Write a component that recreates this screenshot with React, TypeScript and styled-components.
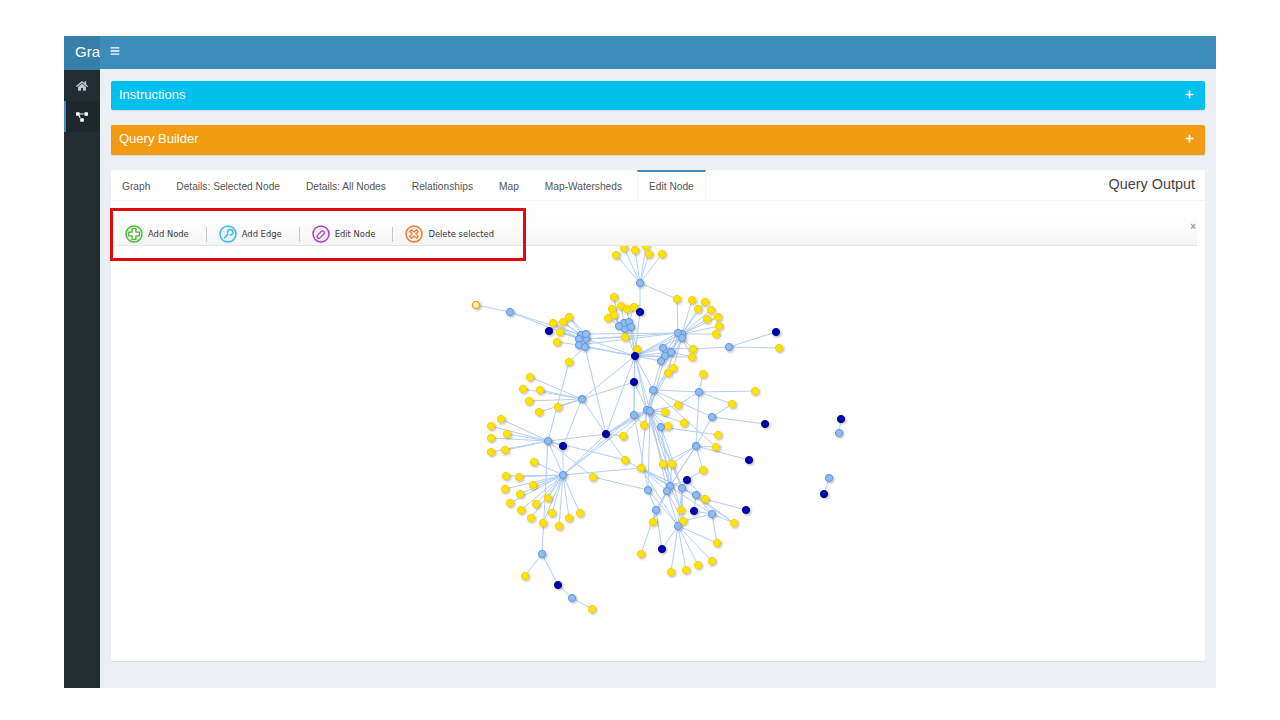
import React from 'react';
import styled, { createGlobalStyle } from 'styled-components';
import { FaBars, FaHome, FaPlus, FaProjectDiagram } from 'react-icons/fa';

const GlobalStyle = createGlobalStyle`
    html, body {
        margin: 0;
        padding: 0;
        background: #fff;
        font-family: "Liberation Sans", Arial, sans-serif;
    }
`;

const Frame = styled.div`
    width: 1152px;
    height: 652px;
    margin: 36px 64px 0;
    display: flex;
    overflow: hidden;
`;

const Sidebar = styled.aside`
    width: 36px;
    flex: none;
    background: #222d32;
`;

const Brand = styled.div`
    height: 34px;
    width: 36px;
    padding-left: 11px;
    box-sizing: border-box;
    background: #367fa9;
    color: #fff;
    font-size: 15px;
    line-height: 31px;
    white-space: nowrap;
    overflow: hidden;
`;

const SideItem = styled.div<{ $active?: boolean }>`
    height: 31px;
    display: flex;
    align-items: center;
    justify-content: center;
    box-sizing: border-box;
    color: ${p => (p.$active ? '#fff' : '#b8c7ce')};
    background: ${p => (p.$active ? '#1e282c' : 'transparent')};
    border-left: 2px solid ${p => (p.$active ? '#3c8dbc' : 'transparent')};
    padding-right: 2px;
    font-size: 12px;
`;

const Main = styled.main`
    flex: 1;
    display: flex;
    flex-direction: column;
    background: #ecf0f5;
`;

const Header = styled.header`
    height: 33px;
    flex: none;
    box-sizing: border-box;
    background: #3c8dbc;
    color: #fff;
    display: flex;
    align-items: center;
    padding: 0 0 3px 10px;
    font-size: 10px;
`;

const Content = styled.div`
    padding: 12px 11px 0;
    display: flex;
    flex-direction: column;
    gap: 15px;
`;

const Collapsed = styled.div<{ $color: string; $height: number }>`
    height: ${p => p.$height}px;
    box-sizing: border-box;
    background: ${p => p.$color};
    border-radius: 2px;
    box-shadow: 0 1px 1px rgba(0, 0, 0, 0.1);
    color: #fff;
    font-size: 13px;
    display: flex;
    align-items: center;
    justify-content: space-between;
    padding: 0 11px 3px 8px;
`;

const TabBox = styled.section`
    height: 491px;
    background: #fff;
    border-radius: 2px;
    box-shadow: 0 1px 1px rgba(0, 0, 0, 0.1);
`;

const TabBar = styled.div`
    height: 31px;
    display: flex;
    align-items: stretch;
    border-bottom: 1px solid #f4f4f4;
    box-sizing: border-box;
    padding-right: 10px;
`;

const Tab = styled.div<{ $active?: boolean }>`
    display: flex;
    align-items: center;
    padding: 0 11px 0 ${p => (p.$active ? 11 : 10)}px;
    margin-right: 3px;
    font-size: 10.2px;
    color: #555;
    white-space: nowrap;
    box-sizing: border-box;
    border-top: 2px solid ${p => (p.$active ? '#3c8dbc' : 'transparent')};
    border-left: 1px solid ${p => (p.$active ? '#f4f4f4' : 'transparent')};
    border-right: 1px solid ${p => (p.$active ? '#f4f4f4' : 'transparent')};
`;

const Title = styled.div`
    margin-left: auto;
    font-size: 14.4px;
    color: #444;
    line-height: 28px;
`;

const Pane = styled.div`
    position: relative;
    padding: 8px 8px 0 6px;
`;

const Toolbar = styled.div`
    height: 37px;
    box-sizing: border-box;
    display: flex;
    align-items: center;
    padding: 14px 0 0 8px;
    background: linear-gradient(#fff, #fcfcfc 40%, #f5f5f5);
    border-bottom: 1px solid #e2e5e5;
    position: relative;
`;

const ToolItem = styled.div`
    display: flex;
    align-items: center;
    gap: 5px;
    font-family: "DejaVu Sans", Verdana, sans-serif;
    font-size: 8.4px;
    color: #3a3a3a;
    white-space: nowrap;
`;

const ToolSep = styled.div`
    width: 1px;
    height: 15px;
    background: #c4c8c8;
    margin: 0 12px 0 17px;
`;

const CloseMark = styled.span`
    position: absolute;
    right: 1px;
    top: 13px;
    font-size: 10px;
    line-height: 10px;
    color: #999;
    font-weight: bold;
`;

const Highlight = styled.div`
    position: absolute;
    left: -1px;
    top: 7px;
    width: 416px;
    height: 53px;
    box-sizing: border-box;
    border: 3px solid #e3080c;
    pointer-events: none;
`;

const GraphSvg = styled.svg`
    display: block;
    width: 1080px;
    height: 412px;
`;

const icons = {
    add: { color: '#4fb843', tint: '#e6f6e2', glyph: <path d="M-1.9-5.4h3.8v3.5h3.5v3.8h-3.5v3.5h-3.8v-3.5h-3.5v-3.8h3.5z" fill="#fff" strokeWidth="1.4" /> },
    edge: { color: '#3cb6ea', tint: '#e4f6fd', glyph: <path d="M-4 4.2l4.2-4.4M-.1-.7a2.7 2.7 0 1 1 1.6 1.4" fill="#fff" strokeWidth="1.5" /> },
    edit: { color: '#a548bf', tint: '#f6e9fa', glyph: <path d="M-3.4 1.4l3.6-3.9a1.8 1.8 0 0 1 2.6 2.5l-3.9 3.9a1.6 1.6 0 0 1-2.3-2.5z" fill="#fff" strokeWidth="1.3" /> },
    del: { color: '#ee7a2f', tint: '#fdeee2', glyph: <path d="M-4.2-2.4l1.8-1.8 2.4 2.4 2.4-2.4 1.8 1.8-2.4 2.4 2.4 2.4-1.8 1.8-2.4-2.4-2.4 2.4-1.8-1.8 2.4-2.4z" fill="#fff" strokeWidth="1.3" /> },
};

function ToolIcon({ kind }: { kind: keyof typeof icons }) {
    const { color, tint, glyph } = icons[kind];
    return (
        <svg width="18" height="18" viewBox="-9 -9 18 18" stroke={color}>
            <circle r="8" fill={tint} strokeWidth="1.5" />
            {glyph}
        </svg>
    );
}

type Kind = 'y' | 'b' | 'd' | 'o';

// hubs: the blue and dark nodes that other nodes hang off
const hubs: Record<string, [number, number, Kind]> = {
    t: [640, 283, 'b'], l: [510, 312, 'b'],
    c1: [586, 339, 'b'], c1b: [581, 335, 'b'], c1c: [586, 334, 'b'], c1d: [579, 339, 'b'], c1e: [579, 345, 'b'], c1f: [585, 347, 'b'],
    c2: [625, 329, 'b'], c2b: [624, 323, 'b'], c2c: [629, 322, 'b'], c2d: [619, 326, 'b'], c2e: [631, 327, 'b'],
    c3: [682, 334, 'b'], c3b: [678, 333, 'b'], c3c: [682, 338, 'b'],
    m1: [663, 348, 'b'], m2: [671, 352, 'b'], m3: [665, 356, 'b'], m4: [661, 361, 'b'],
    z: [729, 347, 'b'], a: [653, 390, 'b'], b: [699, 392, 'b'], e: [712, 417, 'b'],
    k: [647, 410, 'b'], k2: [650, 411, 'b'], n: [634, 415, 'b'], p: [661, 427, 'b'],
    q: [582, 399, 'b'], r: [548, 441, 'b'], s: [563, 475, 'b'], f: [696, 446, 'b'],
    g: [670, 486, 'b'], g2: [667, 491, 'b'], h: [682, 488, 'b'], i: [696, 495, 'b'],
    j: [648, 490, 'b'], u: [656, 510, 'b'], v: [712, 514, 'b'], w: [678, 526, 'b'],
    x: [542, 554, 'b'], y: [572, 598, 'b'],
    d1: [635, 356, 'd'], d2: [640, 312, 'd'], d3: [634, 382, 'd'], d4: [606, 434, 'd'], d5: [563, 446, 'd'],
    d6: [687, 480, 'd'], d7: [694, 511, 'd'], d8: [662, 549, 'd'], d9: [558, 585, 'd'], d10: [549, 331, 'd'],
    d11: [776, 332, 'd'], d12: [765, 424, 'd'], d13: [749, 460, 'd'], d14: [746, 510, 'd'],
    d15: [841, 419, 'd'], d16: [824, 494, 'd'], b2: [839, 433, 'b'], b3: [829, 478, 'b'],
};

// leaves: x, y, then the hubs they link to
const leaves: [number, number, ...string[]][] = [
    [616, 255, 't'], [624, 248, 't'], [635, 250, 't'], [649, 254, 't'], [646, 246, 't'], [662, 254, 't'],
    [677, 299, 't', 'c3b'],
    [553, 323, 'c1', 'c1d'], [563, 322, 'c1', 'c1b'], [569, 317, 'c1c', 'c1'], [560, 332, 'c1d', 'c1'], [557, 342, 'c1e'], [569, 362, 'c1f', 'r'],
    [614, 297, 'c2d'], [621, 306, 'c2b'], [627, 309, 'c2c'], [634, 307, 'c2c'], [612, 309, 'c2d'], [614, 315, 'c2d'], [608, 318, 'c2d'],
    [625, 337, 'c2', 'c1'], [637, 349, 'c2e', 'd1'],
    [692, 300, 'c3'], [705, 302, 'c3'], [698, 309, 'c3'], [711, 310, 'c3'], [718, 317, 'c3'], [707, 319, 'c3'], [719, 326, 'c3'], [716, 334, 'c3'],
    [693, 349, 'c3c', 'z', 'm1'], [692, 357, 'c3c', 'm2', 'd1'], [673, 368, 'c3c', 'a'], [668, 373, 'c3b', 'k'], [703, 374, 'b'],
    [755, 391, 'b'], [732, 404, 'b', 'e'], [678, 405, 'k2', 'b'], [665, 412, 'k'], [684, 423, 'k2'], [644, 425, 'k', 'n'], [668, 426, 'p', 'k2'],
    [718, 435, 'p'], [716, 447, 'a', 'f'], [779, 348, 'z'],
    [530, 377, 'q'], [523, 389, 'q'], [540, 390, 'q'], [529, 401, 'q'], [558, 407, 'q', 'q'], [539, 412, 'q'],
    [501, 419, 'r'], [491, 426, 'r'], [507, 434, 'r'], [491, 438, 'r'], [505, 450, 'r', 'r'], [491, 452, 'r'],
    [534, 462, 's'], [506, 476, 's'], [519, 477, 's'], [533, 485, 's'], [505, 489, 's'], [520, 494, 's'], [548, 498, 's'],
    [510, 503, 's'], [536, 504, 's'], [521, 510, 's'], [552, 513, 's'], [580, 513, 's'], [569, 518, 's'], [531, 518, 's'], [543, 523, 's'], [559, 526, 's'],
    [593, 477, 'r', 'j'], [623, 436, 'k', 'd4'], [625, 460, 'r', 'd4', 'g'], [641, 468, 's', 'k', 'g', 'g2', 'i', 'h', 'v', 'w'],
    [663, 464, 'k', 'f', 'g'], [672, 464, 'k2', 'f', 'g', 'h'], [703, 470, 'f', 'd6'], [705, 499, 'i', 'd14', 'd6'],
    [734, 523, 'v', 'h', 'i'], [681, 510, 'g', 'h', 'k2'], [683, 521, 'v', 'h', 'g2'], [653, 522, 'u', 'g2'],
    [641, 554, 'u'], [717, 543, 'w', 'v'], [712, 561, 'w'], [698, 565, 'w'], [686, 570, 'w'], [671, 572, 'w'],
    [525, 576, 'x'], [592, 609, 'y'],
];

// hub to hub links
const links: [string, string][] = [
    ['l', 'c1b'], ['l', 'c1d'], ['t', 'd2'], ['d2', 'd1'], ['c1', 'd1'], ['c1f', 'd1'], ['c1c', 'c3b'], ['c1', 'c3b'], ['c1e', 'd1'],
    ['c2', 'd1'], ['c2e', 'd1'], ['c2c', 'd1'], ['c3b', 'd1'], ['c3', 'd1'], ['c3c', 'd1'], ['c3b', 'c1e'], ['c3c', 'm3'],
    ['m1', 'd1'], ['m2', 'd1'], ['m3', 'd1'], ['m4', 'd1'], ['m4', 'c3b'], ['m3', 'c3'], ['m2', 'c3'], ['m1', 'c3b'],
    ['d1', 'd3'], ['d1', 'a'], ['d1', 'k'], ['d1', 'k2'], ['d1', 'n'], ['d1', 'q'], ['d1', 'd4'], ['m4', 'k'], ['m3', 'k2'], ['c3c', 'k'],
    ['c1f', 'd4'], ['d3', 'n'], ['d3', 'k'], ['a', 'b'], ['a', 'e'], ['a', 'k'], ['a', 'k2'], ['z', 'd11'],
    ['b', 'f'], ['e', 'f'], ['e', 'd12'], ['k2', 'p'], ['k', 'n'], ['q', 'd4'], ['q', 'd3'], ['q', 'd5'],
    ['r', 'd4'], ['r', 'd5'], ['r', 'x'], ['r', 's'], ['s', 'd5'], ['s', 'd4'], ['s', 'n'], ['s', 'k'],
    ['d4', 'n'], ['d4', 'k'], ['d4', 'k2'], ['k', 'g'], ['k', 'h'], ['k2', 'g2'], ['k2', 'j'], ['p', 'g'], ['p', 'h'], ['n', 'j'],
    ['f', 'd13'], ['f', 'g'], ['f', 'g2'], ['d6', 'h'], ['d6', 'g'], ['g', 'u'], ['g2', 'u'], ['j', 'u'], ['j', 'w'], ['h', 'i'], ['h', 'w'],
    ['g2', 'w'], ['i', 'v'], ['u', 'd8'], ['w', 'd8'], ['d7', 'v'], ['d7', 'i'], ['x', 'd9'], ['d9', 'y'], ['d15', 'b2'], ['b3', 'd16'],
];

const nodeColors: Record<Kind, { fill: string; stroke: string }> = {
    y: { fill: '#ffe600', stroke: '#f3cd10' },
    b: { fill: '#8dbcf6', stroke: '#6596d4' },
    d: { fill: '#0000b4', stroke: '#000a78' },
    o: { fill: '#fff2b0', stroke: '#ee9f22' },
};

function QueryGraph() {
    return (
        <GraphSvg viewBox="117 246 1080 412">
            <defs>
                <filter id="nodeShadow" x="-50%" y="-50%" width="220%" height="220%">
                    <feDropShadow dx="1.2" dy="1.2" stdDeviation="0.8" floodColor="#000" floodOpacity="0.3" />
                </filter>
            </defs>
            <g stroke="#b3cff5" strokeWidth="1">
                <line x1={476} y1={305} x2={510} y2={312} />
                {links.map(([a, b], n) => (
                    <line key={n} x1={hubs[a][0]} y1={hubs[a][1]} x2={hubs[b][0]} y2={hubs[b][1]} />
                ))}
                {leaves.map(([x, y, ...to], n) =>
                    to.map((h, m) => <line key={`${n}-${m}`} x1={x} y1={y} x2={hubs[h][0]} y2={hubs[h][1]} />)
                )}
            </g>
            <g filter="url(#nodeShadow)" strokeWidth="1">
                <circle cx={476} cy={305} r={3.6} fill={nodeColors.o.fill} stroke={nodeColors.o.stroke} strokeWidth="1.4" />
                {leaves.map(([x, y], n) => (
                    <circle key={n} cx={x} cy={y} r={3.6} fill={nodeColors.y.fill} stroke={nodeColors.y.stroke} />
                ))}
                {Object.entries(hubs).map(([id, [x, y, k]]) => (
                    <circle key={id} cx={x} cy={y} r={3.6} fill={nodeColors[k].fill} stroke={nodeColors[k].stroke} />
                ))}
            </g>
        </GraphSvg>
    );
}

const tabs = ['Graph', 'Details: Selected Node', 'Details: All Nodes', 'Relationships', 'Map', 'Map-Watersheds'];

function App() {
    return (
        <>
            <GlobalStyle />
            <Frame>
                <Sidebar>
                    <Brand>Graph</Brand>
                    <SideItem><FaHome /></SideItem>
                    <SideItem $active><FaProjectDiagram /></SideItem>
                </Sidebar>
                <Main>
                    <Header><FaBars /></Header>
                    <Content>
                        <Collapsed $color="#00c0ef" $height={29}>
                            Instructions
                            <FaPlus size={9} />
                        </Collapsed>
                        <Collapsed $color="#f39c12" $height={30}>
                            Query Builder
                            <FaPlus size={9} />
                        </Collapsed>
                        <TabBox>
                            <TabBar>
                                {tabs.map(t => <Tab key={t}>{t}</Tab>)}
                                <Tab $active>Edit Node</Tab>
                                <Title>Query Output</Title>
                            </TabBar>
                            <Pane>
                                <Toolbar>
                                    <ToolItem><ToolIcon kind="add" />Add Node</ToolItem>
                                    <ToolSep />
                                    <ToolItem><ToolIcon kind="edge" />Add Edge</ToolItem>
                                    <ToolSep />
                                    <ToolItem><ToolIcon kind="edit" />Edit Node</ToolItem>
                                    <ToolSep />
                                    <ToolItem><ToolIcon kind="del" />Delete selected</ToolItem>
                                    <CloseMark>×</CloseMark>
                                </Toolbar>
                                <QueryGraph />
                                <Highlight />
                            </Pane>
                        </TabBox>
                    </Content>
                </Main>
            </Frame>
        </>
    );
}

export default App;
